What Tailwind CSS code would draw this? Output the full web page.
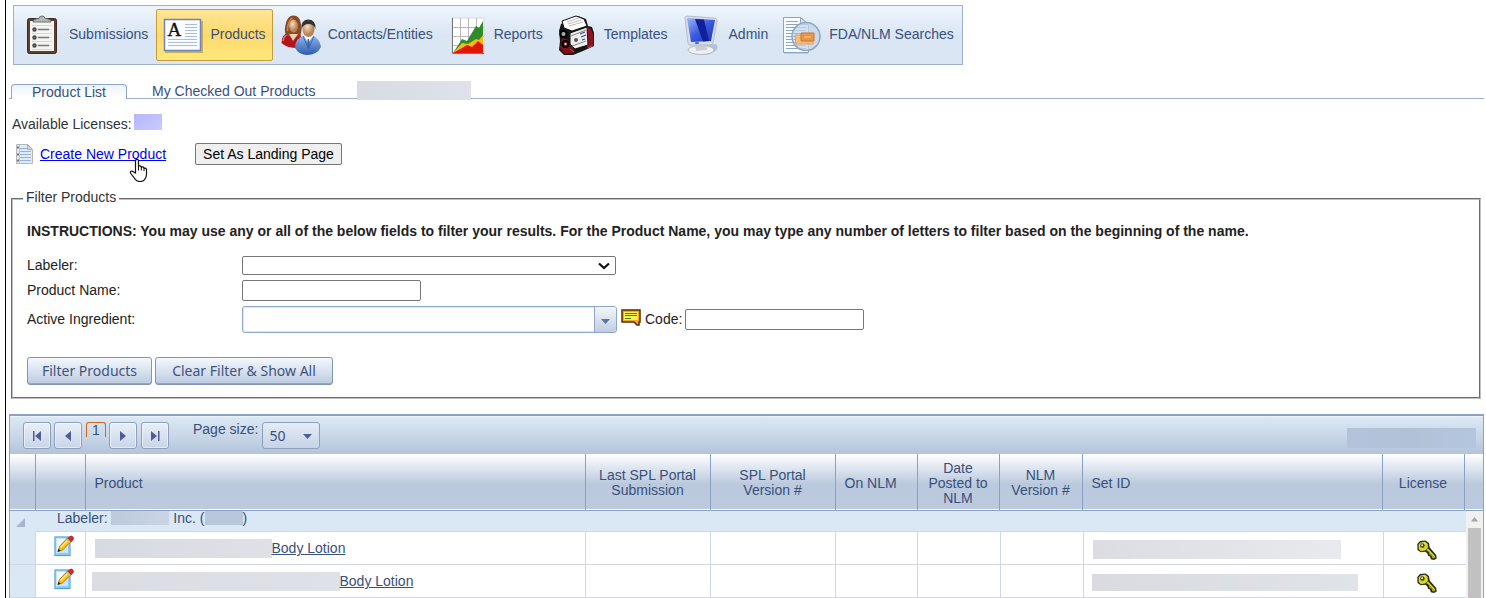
<!DOCTYPE html>
<html lang="en">

<head>
  <meta charset="UTF-8">
  <meta name="viewport" content="width=device-width, initial-scale=1.0">
  <title>Product List</title>
  <script src="https://cdn.jsdelivr.net/npm/@tailwindcss/browser@4"></script>
</head>

<body class="bg-white font-['Liberation_Sans',Arial,sans-serif] text-sm leading-4 text-[#333]">

  <!-- Shared row icons -->
  <svg class="hidden">
    <symbol id="edit" viewBox="0 0 20 22">
      <rect x="1" y="2" width="15" height="18.500" fill="#c4e6fb" stroke="#4f9fe6" stroke-width="1.200" />
      <path d="M3 4h10L3 16z" fill="#f4fbff" />
      <path d="M2.500 19h12.500V10" fill="none" stroke="#7fc1f3" stroke-width="1.500" />
      <path d="M4 16.500 5.500 11.500 14 2.500l3.500 3.500-9 9z" fill="#fdbf1e" stroke="#b07a00" />
      <path d="m6.500 12.500 8.500-8.500" stroke="#ffe98c" stroke-width="1.500" />
      <path d="m13.800 3.500 2-2q1.700-1 3 .3t.3 3l-2 2z" fill="#d8281c" stroke="#9c1a10" stroke-width=".6" />
      <path d="m13 4.200 3.300 3.300" stroke="#bbb" stroke-width="1.400" />
      <path d="m3.600 17 .9-3.200 2 2z" fill="#222" />
    </symbol>
    <symbol id="key" viewBox="0 0 20 20">
      <path d="M3 1 8.500.5l3.500 2.500.7 4.500 6.500 7.500.5 3.500-2.700 1.500-3.200-.7-.8-2.800-2-.7-.7-2.600-2-1.500-4.500.5L.5 10 .3 4z" fill="#2a2a10" />
      <path d="M3.500 2.500 8 1.800l2.800 2.200v4L8 10.600l-4 .6L1.700 9V4.400z" fill="#d8d818" />
      <path d="m9 10 2-1.800 7 7.700v2l-1.500.7-1.300-.6-.6-2.300-2-.8-.8-2.800z" fill="#aaa610" />
      <path d="m10.500 9 7 7.500" stroke="#eeea50" />
      <path d="M3 5.500 5 3.300 8.500 3" fill="none" stroke="#ffff80" />
      <circle cx="5.400" cy="5.500" r="2.200" fill="#333" />
      <circle cx="5.200" cy="5.300" r="1" fill="#fff" />
    </symbol>
  </svg>

  <div class="ml-[5px] flex h-screen flex-col overflow-hidden border-l border-black pr-0.5 pl-[3px]">

    <!-- Main menu -->
    <nav class="mt-[5px] ml-1 flex h-[60px] items-center gap-0.5 self-start border border-[#9ab0d2] bg-linear-to-b from-[#eff6fe] via-[#dae6f4] via-50% to-[#dbe6f4] px-0.5 whitespace-nowrap text-[#38507c]">
      <a href="#" class="flex h-[52px] items-center gap-[7px] px-1.5">
        <svg class="size-10" viewBox="0 0 40 40">
          <rect x="5.500" y="3.500" width="29" height="35" rx="2" fill="#59402f" stroke="#3e2a1e" />
          <rect x="8" y="6" width="24" height="30" fill="#f5f5f3" />
          <path d="M10 10.500h20M10 14.500h20M10 18.500h20M10 22.500h20M10 26.500h20M10 30.500h20M10 34.500h20" stroke="#d5d8da" />
          <path d="M16 14.500h11M16 22.500h11M16 30.500h11" stroke="#777" stroke-width="1.300" />
          <g fill="#888" stroke="#444" stroke-width="1.400">
            <circle cx="12.500" cy="14.500" r="1.500" />
            <circle cx="12.500" cy="22.500" r="1.500" />
            <circle cx="12.500" cy="30.500" r="1.500" />
          </g>
          <path d="M11 7q0-3 6-3.500 0-2.500 3-2.500t3 2.500q6 .5 6 3.500z" fill="#b5b8ba" stroke="#6d7072" />
        </svg>
        <span class="-mt-0.5">Submissions</span>
      </a>
      <a href="#" class="flex h-[52px] items-center gap-[7px] rounded-xs border border-[#c69b3c] bg-linear-to-b from-[#ffe596] via-[#ffd96c] via-50% to-[#ffe97c] px-1.5">
        <svg class="size-10" viewBox="0 0 40 40">
          <rect x="2" y="6" width="38" height="32" fill="#907a45" opacity=".5" />
          <rect x="1.500" y="4.500" width="36" height="31" fill="#fbfcff" stroke="#6b86b3" stroke-width="1.500" />
          <path d="M22 9.500h12M22 12.500h12M22 15.500h12M22 18.500h12M22 21.500h12M5 24.500h29M5 27.500h29M5 30.500h29" stroke="#a9bfe2" stroke-width="1.200" />
          <text x="4.500" y="21" font-family="Liberation Serif, serif" font-size="19" fill="#111" stroke="#111" stroke-width=".4">A</text>
        </svg>
        <span class="-mt-0.5">Products</span>
      </a>
      <a href="#" class="flex h-[52px] items-center gap-[7px] px-1.5">
        <svg class="size-10" viewBox="0 0 40 40">
          <defs>
            <linearGradient id="suit" x2="0" y2="1">
              <stop stop-color="#8db4ea" />
              <stop offset="1" stop-color="#2d5cae" />
            </linearGradient>
            <radialGradient id="skin" cx=".4" cy=".35">
              <stop stop-color="#f9dfc0" />
              <stop offset="1" stop-color="#b98358" />
            </radialGradient>
          </defs>
          <path d="M.5 28q0-9 8-11l10-1 4 16Q8 35 .5 28z" fill="#b3151c" />
          <path d="M2 26q1-6 6-7" stroke="#ec6b62" stroke-width="1.500" fill="none" />
          <path d="M5 20Q3 16 4.500 10 6 .5 12.500.5T20 9q1.500 6-1 12-7 3-14-1z" fill="#8a4a25" />
          <path d="M6.500 16q0-10 5-13" fill="none" stroke="#c98253" stroke-width="1.500" />
          <path d="m8 19 4 7 5-7z" fill="#efcfb2" />
          <ellipse cx="12.500" cy="11" rx="4.500" ry="6.500" fill="url(#skin)" />
          <path d="M14 33q0-10 9-12h9q7 3 8 11-4 8-14 8-8 0-12-7z" fill="url(#suit)" />
          <path d="m23 21 4 7 5-7z" fill="#fff" />
          <path d="m26.500 24 1.500 0 1 8-1.500 2-1.500-2z" fill="#4166a8" />
          <path d="m22 21 5.500 13M33 21l-5.500 13" stroke="#3a66b4" fill="none" />
          <ellipse cx="27.500" cy="14" rx="6" ry="8" fill="url(#skin)" />
          <path d="M20.500 14q-1-9 6.500-9.500Q35 4.500 34.500 14q-2-5-7-5t-7 5z" fill="#343434" />
        </svg>
        <span class="-mt-0.5">Contacts/Entities</span>
      </a>
      <a href="#" class="flex h-[52px] items-center gap-[7px] px-1.5">
        <svg class="size-10" viewBox="0 0 40 40">
          <rect x="5" y="3" width="32" height="36" fill="#fff" stroke="#d5d5d5" />
          <path d="M5.500 12.500H37M5.500 21.500H37M5.500 30.500H37M13.500 3v35M21.500 3v35M29.500 3v35" stroke="#b9b9b9" />
          <path d="M6 38 15 24l5 2L29 11l3 2 4-7v32z" fill="#2f8b2e" />
          <path d="m6 38 9-10 6 1 8-5 3 1 4-5v18z" fill="#f9b90e" />
          <path d="m6 38 9-5 5-3 5 2 6-6 5 4v8z" fill="#e01708" />
          <path d="M5.500 3v35.500H37" fill="none" stroke="#777" />
        </svg>
        <span class="-mt-0.5">Reports</span>
      </a>
      <a href="#" class="flex h-[52px] items-center gap-[7px] px-1.5">
        <svg class="size-10" viewBox="0 0 40 40">
          <path d="m4 9 17-8 8 3 2 7 4 1 2 6 0 13-11 5-10 4H7l-5-5 1-9-1-10z" fill="#161616" />
          <path d="m5 23 6 2 5 6 1 7-9 1-5-6z" fill="#7f1019" />
          <path d="m29 11 5 3 2 5v12l-6 3z" fill="#8d1522" />
          <path d="m5 6 14-5 8 3 3 7-15 5-8-3z" fill="#fff" stroke="#111" />
          <path d="m10 7 12-4M11 9l13-4M12 11l14-4" stroke="#bbb" />
          <path d="m13 18 17-6 1 18-13 4-5-5z" fill="#eee" stroke="#111" />
          <path d="m14 21 15-6M15 31l14-5" stroke="#888" />
          <path d="m23 19 5-2m-4 5 5-2m-4 5 3-1" stroke="#3944a0" stroke-width="1.300" />
          <circle cx="19" cy="25" r="2" fill="#555" />
          <circle cx="6.500" cy="19" r="3" fill="#aaadb0" stroke="#000" stroke-width="2" />
          <circle cx="8.500" cy="29" r="3" fill="#9b202c" stroke="#000" stroke-width="2" />
          <circle cx="8.500" cy="29" r="1" fill="#fff" />
          <path d="m13 34 4 3m14-4 4-2" stroke="#c34b52" />
        </svg>
        <span class="-mt-0.5">Templates</span>
      </a>
      <a href="#" class="flex h-[52px] items-center gap-[7px] px-1.5">
        <svg class="size-10" viewBox="0 0 40 40">
          <defs>
            <linearGradient id="lcd" x2="1" y2="1">
              <stop stop-color="#9fb9f4" />
              <stop offset=".5" stop-color="#3b5ae0" />
              <stop offset="1" stop-color="#1d31b4" />
            </linearGradient>
          </defs>
          <path d="M10 35q4-5 12-5l12-1q4 4-2 8-6 4-16 3-6-1-6-5z" fill="#9aa8c0" opacity=".6" />
          <ellipse cx="19" cy="35" rx="13" ry="4.500" fill="#eef0f3" stroke="#b7bcc6" />
          <path d="m13 28 11 0 1 7-11 1z" fill="#c9ced7" />
          <path d="M3 3q0-2 2-2l27 2q3 0 3 3l-4 22q-.5 2-3 2L8 30q-2 0-2-2z" fill="#d8dde6" stroke="#b6bccb" />
          <path d="m5 3 28 2-4 21-20 1z" fill="url(#lcd)" />
          <path d="m13 4 9 .6 5 21.500-6 .3z" fill="#10219a" />
          <rect x="13" y="27" width="4" height="2" rx="1" fill="#2f74ef" />
        </svg>
        <span class="-mt-0.5">Admin</span>
      </a>
      <a href="#" class="flex h-[52px] items-center gap-[7px] px-1.5">
        <svg class="size-10" viewBox="0 0 40 40">
          <path d="M2 3h16l8 7v29H2z" fill="#a4b4c8" opacity=".5" />
          <path d="M1.500 2.500h17l8 7v28h-25z" fill="#fcfdff" stroke="#8ca4c4" />
          <path d="M18.500 2.500v7h8z" fill="#dbe5f2" stroke="#8ca4c4" />
          <path d="M4 6.500h12M4 9.500h12M4 12.500h20M4 15.500h20M4 18.500h20M4 21.500h20M4 24.500h20M4 27.500h20M4 30.500h20M4 33.500h20" stroke="#8aa6d0" />
          <circle cx="24" cy="21.500" r="14" fill="#c4d6ea" fill-opacity=".75" stroke="#91a5bd" stroke-width="1.500" />
          <path d="M12 18.500h17M12 21.500h17M12 24.500h17M12 27.500h17" stroke="#8eaad2" stroke-opacity=".6" />
          <path d="M13 20h18v9H14z" fill="#f3bc83" stroke="#e0a469" />
          <path d="M19 18h13v8H19z" fill="#ee9643" stroke="#c87729" />
          <rect x="21.500" y="20.500" width="8" height="3" fill="#f3b172" stroke="#d38a43" stroke-width=".6" />
        </svg>
        <span class="-mt-0.5">FDA/NLM Searches</span>
      </a>
    </nav>

    <!-- Tabs -->
    <div class="mt-4 flex h-[18px] shrink-0 items-end border-b border-[#9cb0cd] text-[#38507c]">
      <a href="#" class="-mb-px ml-0.5 flex h-[15px] w-[116px] items-center justify-center rounded-t border border-b-0 border-[#8fa6cb] bg-linear-to-b from-[#eef4fb] to-white leading-3">Product List</a>
      <a href="#" class="ml-[25px] h-[15px]">My Checked Out Products</a>
      <span class="-mb-0.5 ml-[42px] h-[19px] w-[114px] bg-linear-to-r from-[#d8dbe2] to-[#dfe2ea]"></span>
    </div>

    <div class="mt-4 ml-[3px] flex h-[18px] items-center gap-0.5">
      Available Licenses:
      <span class="-mt-1 h-4 w-7 bg-linear-to-br from-[#b6b6fc] to-[#cacaff]"></span>
    </div>

    <div class="mt-2.5 ml-[7px] flex h-[22px] items-center">
      <svg class="mr-[7px] h-5 w-[17px]" viewBox="0 0 17 20">
        <path d="M.5.500h11l5 5v14H.500z" fill="#e4eaf2" stroke="#b4b6b8" />
        <path d="M11.500.500v5h5z" fill="#cfd3d8" stroke="#adb0b4" />
        <path d="M4 4.500h7M4 7.500h11M4 10.500h11M4 13.500h11M4 16.500h11" stroke="#8fb4e0" />
        <path d="M3.500 1v18" stroke="#c3c5c8" />
        <path d="M1 3.500h2M1 10.500h2M1 16.500h2" stroke="#777" stroke-width="2" />
      </svg>
      <span class="relative">
        <a href="#" class="text-[#0000ee] underline">Create New Product</a>
        <svg class="absolute top-3 left-[89px] h-6 w-[19px]" viewBox="0 0 19 24">
          <path d="M6.500 15V3q0-1.700 1.500-1.700T9.500 3v6q0-1.300 1.400-1.200T12.300 9v.8q.2-1 1.400-.9t1.300 1.300v.6q.2-.8 1.200-.7t1.300 1.200v5q0 3-2 5.500-1 1.700-4.500 1.700-3 0-4.500-1.800L1.800 15.500q-1-1.500.2-2.200 1.200-.6 2.300.4z" fill="#fff" stroke="#111" stroke-width="1.200" />
          <path d="M9.500 9v3.500M12.300 9.500v3M15 10.500v2.500" stroke="#111" />
        </svg>
      </span>
      <button type="button" class="ml-[29px] h-[22px] rounded-xs border border-[#767676] bg-[#efefef] px-[7px] text-black">Set As Landing Page</button>
    </div>

    <!-- Filter form -->
    <fieldset class="mt-6 mr-[3px] ml-0.5 h-[210px] shrink-0 border-2 border-[#c0c0c0] [border-style:groove] px-3.5 text-[#222]">
      <legend class="-ml-1 h-5 px-[3px] text-[#333]">Filter Products</legend>
      <p class="mt-3.5 font-bold">INSTRUCTIONS: You may use any or all of the below fields to filter your results. For the Product Name, you may type any number of letters to filter based on the beginning of the name.</p>
      <div class="mt-[17px] grid grid-cols-[215px_1fr] items-center gap-y-[5px]">
        <label for="labeler" class="-mt-0.5">Labeler:</label>
        <div class="relative h-[19px] w-[374px]">
          <select id="labeler" class="block h-[19px] w-full appearance-none rounded-xs border border-[#767676] bg-white">
            <option></option>
          </select>
          <svg class="pointer-events-none absolute top-1.5 right-1.5 h-2 w-3" viewBox="0 0 12 8">
            <path d="m1 1.500 5 4.500 5-4.500" fill="none" stroke="#111" stroke-width="2.200" />
          </svg>
        </div>
        <label for="name" class="-mt-0.5">Product Name:</label>
        <input id="name" type="text" class="h-[21px] w-[179px] rounded-xs border border-[#767676] px-0.5">
        <label for="ingredient" class="-mt-0.5">Active Ingredient:</label>
        <div class="flex items-center">
          <div class="flex h-[27px] w-[375px] overflow-hidden rounded-[3px] border border-[#8fa6cb] shadow-[inset_0_0_1px_1px_#dde6f2]">
            <input id="ingredient" type="text" class="min-w-0 flex-1 px-1">
            <button type="button" aria-label="Open list" class="flex w-[22px] items-center justify-center border-l border-[#8fa6cb] bg-linear-to-b from-[#f4f7fb] to-[#c0cde2]">
              <svg class="mt-1 h-[5px] w-[9px]" viewBox="0 0 9 5">
                <path d="M0 0h9L4.500 5z" fill="#6472a6" />
              </svg>
            </button>
          </div>
          <svg class="-mt-1 mr-1 ml-1 h-[17px] w-5" viewBox="0 0 20 17">
            <path d="M1 1h18v12h-1v3h-2l-3-3H1z" fill="#f7a81b" stroke="#5a2a06" stroke-width="1.500" />
            <path d="M3 3h14v8H3z" fill="#fff34a" />
            <path d="M4 4.500h12M4 6.500h12M4 9.500h6" stroke="#2c8a1e" stroke-width="1.200" />
          </svg>
          <label for="code" class="-mt-0.5 mr-[3px]">Code:</label>
          <input id="code" type="text" class="h-[21px] w-[179px] rounded-xs border border-[#767676] px-0.5">
        </div>
      </div>
      <div class="mt-6 flex gap-[3px] font-['Noto_Sans',sans-serif] text-[#3e5480]">
        <button type="button" class="h-7 w-[125px] rounded-[3px] border border-[#8095b8] bg-linear-to-b from-[#f5f8fc] to-[#bccbe1] whitespace-nowrap shadow-[inset_0_-1px_0_#91a5c5]">Filter Products</button>
        <button type="button" class="h-7 w-[178px] rounded-[3px] border border-[#8095b8] bg-linear-to-b from-[#f5f8fc] to-[#bccbe1] whitespace-nowrap shadow-[inset_0_-1px_0_#91a5c5]">Clear Filter &amp; Show All</button>
      </div>
    </fieldset>

    <!-- Product grid -->
    <div class="mt-[15px] flex min-h-0 flex-1 flex-col border-x border-t-2 border-[#8ba2c4] text-[#38507c]">
      <div class="flex h-[38px] shrink-0 items-start border-t border-[#eaf2fa] bg-linear-to-b from-[#dbe8f5] via-[#c9d7e8] via-50% to-[#b3c4d9] pt-[5px] pr-[7px] pl-[13px]">
        <button type="button" aria-label="First page" class="mr-[3px] flex h-[27px] w-7 items-center justify-center rounded-[3px] border border-[#8fa0bf] bg-linear-to-b from-[#e9eff7] to-[#c8d5e7] inset-ring inset-ring-white/50">
          <svg class="size-2.5" viewBox="0 0 10 10"><path d="M1 0h1.500v10H1zM9 0v10L3 5z" fill="#525d94" /></svg>
        </button>
        <button type="button" aria-label="Previous page" class="mr-1 flex h-[27px] w-7 items-center justify-center rounded-[3px] border border-[#8fa0bf] bg-linear-to-b from-[#e9eff7] to-[#c8d5e7] inset-ring inset-ring-white/50">
          <svg class="size-2.5" viewBox="0 0 10 10"><path d="M8 0v10L2 5z" fill="#525d94" /></svg>
        </button>
        <a href="#" class="mr-[3px] h-[15px] w-5 rounded-t-[3px] border border-b-0 border-[#d0661c] text-center leading-[14px]">1</a>
        <button type="button" aria-label="Next page" class="mr-1 flex h-[27px] w-7 items-center justify-center rounded-[3px] border border-[#8fa0bf] bg-linear-to-b from-[#e9eff7] to-[#c8d5e7] inset-ring inset-ring-white/50">
          <svg class="size-2.5" viewBox="0 0 10 10"><path d="M2 0v10l6-5z" fill="#525d94" /></svg>
        </button>
        <button type="button" aria-label="Last page" class="flex h-[27px] w-7 items-center justify-center rounded-[3px] border border-[#8fa0bf] bg-linear-to-b from-[#e9eff7] to-[#c8d5e7] inset-ring inset-ring-white/50">
          <svg class="size-2.5" viewBox="0 0 10 10"><path d="M8 0h1.500v10H8zM1 0v10l6-5z" fill="#525d94" /></svg>
        </button>
        <label for="pagesize" class="mr-1 ml-6 leading-3.5">Page size:</label>
        <div class="relative">
          <select id="pagesize" class="block h-[27px] w-[58px] appearance-none rounded-[3px] border border-[#8fa0bf] bg-linear-to-b from-[#e4ecf6] to-[#c6d3e6] pl-1.5 font-['Noto_Sans',sans-serif]">
            <option>50</option>
          </select>
          <svg class="pointer-events-none absolute top-3 right-2 h-[5px] w-[9px]" viewBox="0 0 9 5">
            <path d="M0 0h9L4.500 5z" fill="#525d94" />
          </svg>
        </div>
        <span class="mt-1.5 ml-auto h-5 w-[129px] bg-linear-to-r from-[#b3c3d9] via-[#b2c2d6] to-[#b4c6df]"></span>
      </div>

      <table class="w-full shrink-0 table-fixed border-collapse">
        <colgroup>
          <col class="w-[25px]">
          <col class="w-[50px]">
          <col>
          <col class="w-[125px]">
          <col class="w-[125px]">
          <col class="w-[82px]">
          <col class="w-[82px]">
          <col class="w-[83px]">
          <col class="w-[300px]">
          <col class="w-[82px]">
          <col class="w-[19px]">
        </colgroup>
        <thead>
          <tr class="h-14 divide-x divide-[#8ba0c3] border-b border-[#8ba0c3] bg-linear-to-b from-white via-[#bac9dd] via-55% to-[#bccadf] leading-[15px] *:pt-[3px] *:font-normal">
            <th></th>
            <th></th>
            <th class="px-[9px] text-left">Product</th>
            <th class="px-2">Last SPL Portal Submission</th>
            <th class="px-5">SPL Portal Version #</th>
            <th class="px-[9px] text-left">On NLM</th>
            <th class="px-2">Date Posted to NLM</th>
            <th class="px-2">NLM Version #</th>
            <th class="px-[9px] text-left">Set ID</th>
            <th>License</th>
            <th></th>
          </tr>
        </thead>
      </table>

      <div class="flex min-h-0 flex-1 overflow-hidden">
        <div class="min-w-0 flex-1">
          <table class="w-full table-fixed border-collapse">
            <colgroup>
              <col class="w-[25px]">
              <col class="w-[50px]">
              <col>
              <col class="w-[125px]">
              <col class="w-[125px]">
              <col class="w-[82px]">
              <col class="w-[83px]">
              <col class="w-[83px]">
              <col class="w-[300px]">
              <col class="w-[82px]">
            </colgroup>
            <tbody>
              <tr class="h-[21px] border-b border-[#d0d7e5] bg-[#dae7f5]">
                <td class="border-b border-[#dae7f5]">
                  <svg class="mt-1 ml-1.5 size-[9px]" viewBox="0 0 9 9"><path d="M9 0v9H0z" fill="#a6b5d0" /></svg>
                </td>
                <td colspan="9" class="pb-1.5 pl-[22px]">
                  <div class="flex h-3.5 items-center whitespace-pre">Labeler: <span class="h-3.5 w-[58px] bg-linear-to-r from-[#bccadb] to-[#c9d5e4]"></span> Inc. (<span class="h-3.5 w-[38px] bg-[#b9c7da]"></span>)</div>
                </td>
              </tr>
              <tr class="h-[33px] divide-x divide-[#d0d7e5] border-b border-[#d0d7e5]">
                <td class="bg-[#dae7f5]"></td>
                <td><a href="#" aria-label="Edit product"><svg class="-mt-1 ml-[18px] h-[22px] w-5"><use href="#edit" /></svg></a></td>
                <td class="pl-[9px]"><a href="#" class="flex items-center underline"><span class="h-[19px] w-[177px] bg-linear-to-r from-[#d7dae1] to-[#e0e1e7]"></span>Body Lotion</a></td>
                <td></td>
                <td></td>
                <td></td>
                <td></td>
                <td></td>
                <td class="pl-[9px]"><span class="mt-0.5 block h-[19px] w-[248px] bg-linear-to-r from-[#dbdde3] to-[#e9eaed]"></span></td>
                <td><svg class="mt-1 ml-[33px] size-5"><use href="#key" /></svg></td>
              </tr>
              <tr class="h-[33px] divide-x divide-[#d0d7e5] border-b border-[#d0d7e5]">
                <td class="bg-[#dae7f5]"></td>
                <td><a href="#" aria-label="Edit product"><svg class="-mt-1 ml-[18px] h-[22px] w-5"><use href="#edit" /></svg></a></td>
                <td class="pl-1.5"><a href="#" class="flex items-center underline"><span class="h-[19px] w-[248px] bg-linear-to-r from-[#dbdde3] to-[#dee1e7]"></span>Body Lotion</a></td>
                <td></td>
                <td></td>
                <td></td>
                <td></td>
                <td></td>
                <td class="pl-2"><span class="mt-0.5 block h-[17px] w-[266px] bg-linear-to-r from-[#d9dbe1] to-[#e0e3e7]"></span></td>
                <td><svg class="mt-1 ml-[33px] size-5"><use href="#key" /></svg></td>
              </tr>
            </tbody>
          </table>
        </div>
        <!-- Scroll bar -->
        <div class="flex w-[17px] flex-col items-center bg-[#f1f1f1]">
          <svg class="my-1.5 h-[5px] w-[7px] shrink-0" viewBox="0 0 7 5"><path d="M3.500 0 7 4.500H0z" fill="#a3a3a3" /></svg>
          <div class="w-[13px] flex-1 bg-[#c1c1c1]"></div>
        </div>
      </div>
    </div>
  </div>
</body>

</html>
